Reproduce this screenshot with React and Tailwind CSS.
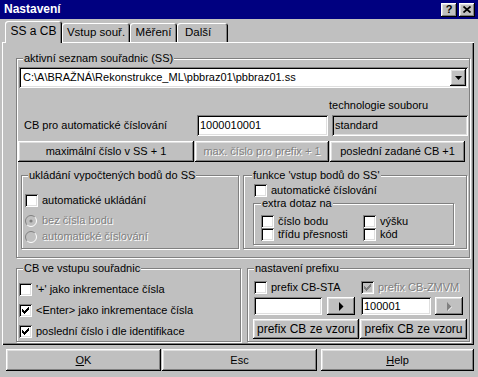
const raised = "bg-[#c0c0c0] shadow-[inset_-1px_-1px_#000,inset_1px_1px_#fff,inset_-2px_-2px_#808080,inset_2px_2px_#dfdfdf]"
const sunken = "shadow-[inset_1px_1px_#808080,inset_-1px_-1px_#fff,inset_2px_2px_#000,inset_-2px_-2px_#dfdfdf]"
const dim = "text-[#808080] [text-shadow:1px_1px_0_#fff]"

function Group({ title, className, legend = "left-[6px]", children }) {
  return (
    <div className={`relative flex flex-col shrink-0 border border-[#808080] shadow-[inset_1px_1px_#fff,1px_1px_#fff] ${className}`}>
      <span className={`absolute -top-[7px] ${legend} bg-[#c0c0c0] px-[1px] leading-[13px] whitespace-nowrap`}>{title}</span>
      {children}
    </div>
  )
}

function Check({ checked, disabled }) {
  const c = disabled ? "#808080" : "#000"
  return (
    <span className={`w-[13px] h-[13px] shrink-0 flex items-center justify-center ${disabled ? "bg-[#c0c0c0]" : "bg-white"} ${sunken}`}>
      {checked && (
        <svg width="7" height="7" viewBox="0 0 7 7" shapeRendering="crispEdges">
          <g fill={c}>
            <rect x="6" y="0" width="1" height="1" />
            <rect x="5" y="1" width="2" height="1" />
            <rect x="0" y="2" width="1" height="1" />
            <rect x="4" y="2" width="3" height="1" />
            <rect x="0" y="3" width="2" height="1" />
            <rect x="3" y="3" width="3" height="1" />
            <rect x="0" y="4" width="5" height="1" />
            <rect x="1" y="5" width="3" height="1" />
            <rect x="2" y="6" width="1" height="1" />
          </g>
        </svg>
      )}
    </span>
  )
}

function CheckRow({ label, checked, disabled, className = "" }) {
  return (
    <div className={`flex items-center h-[13px] shrink-0 ${className}`}>
      <Check checked={checked} disabled={disabled} />
      <span className={`ml-[4px] whitespace-nowrap ${disabled ? dim : ""}`}>{label}</span>
    </div>
  )
}

function Radio({ label, dot, className = "" }) {
  return (
    <div className={`flex items-center h-[13px] shrink-0 ${className}`}>
      <svg width="12" height="12" viewBox="0 0 12 12" className="shrink-0">
        <circle cx="6" cy="6" r="5" fill="#c0c0c0" />
        <path d="M9.89 2.11A5.5 5.5 0 0 0 2.11 9.89" fill="none" stroke="#808080" />
        <path d="M2.11 9.89A5.5 5.5 0 0 0 9.89 2.11" fill="none" stroke="#fff" />
        {dot && <circle cx="6" cy="6" r="1.6" fill="#808080" />}
      </svg>
      <span className={`ml-[5px] whitespace-nowrap ${dim}`}>{label}</span>
    </div>
  )
}

function Btn({ children, className = "", disabled }) {
  return (
    <div className={`shrink-0 flex items-center justify-center whitespace-nowrap ${raised} ${disabled ? dim : ""} ${className}`}>
      {children}
    </div>
  )
}

function Arrow({ disabled }) {
  return (
    <svg width="5" height="9" viewBox="0 0 5 9">
      {disabled && <path d="M1 1l4 4-4 4z" fill="#fff" />}
      <path d="M0 0l4.5 4.5L0 9z" fill={disabled ? "#808080" : "#000"} />
    </svg>
  )
}

export default function App() {
  return (
    <div className="w-[478px] h-[377px] bg-[#c0c0c0] overflow-hidden flex flex-col font-['Liberation_Sans',Arial,sans-serif] text-[11px] leading-[13px] text-black">
      {/* title bar */}
      <div className="h-[19px] shrink-0 bg-[#000080] flex items-center pl-[4px] pr-[3px]">
        <span className="text-white font-bold text-[12px]">Nastavení</span>
        <div className="ml-auto flex gap-[2px]">
          <Btn className="w-[16px] h-[14px] font-bold text-[11px] pb-[1px]">?</Btn>
          <Btn className="w-[16px] h-[14px]">
            <svg width="8" height="7" viewBox="0 0 8 7">
              <path d="M0.5 0.5L7.5 6.5M7.5 0.5L0.5 6.5" stroke="#000" strokeWidth="1.7" />
            </svg>
          </Btn>
        </div>
      </div>

      {/* tabs */}
      <div className="mt-[2px] h-[21px] shrink-0 flex items-end pl-[5px]">
        <div className="relative z-10 h-[22px] w-[57px] -mb-[1px] bg-[#c0c0c0] rounded-t-[3px] shadow-[inset_1px_1px_#fff,inset_-1px_0_#000,inset_-2px_0_#808080] flex justify-center pt-[4px] text-[12px]">
          SS a CB
        </div>
        <div className="h-[19px] w-[68px] rounded-t-[3px] shadow-[inset_1px_1px_#fff,inset_-1px_0_#000,inset_-2px_0_#808080] flex justify-center pt-[3px] text-[11.5px]">
          Vstup souř.
        </div>
        <div className="h-[19px] w-[47px] rounded-t-[3px] shadow-[inset_1px_1px_#fff,inset_-1px_0_#000,inset_-2px_0_#808080] flex justify-center pt-[3px] text-[11.5px]">
          Měření
        </div>
        <div className="h-[19px] w-[51px] rounded-t-[3px] shadow-[inset_1px_1px_#fff,inset_-1px_0_#000,inset_-2px_0_#808080] flex pl-[8px] pt-[3px] text-[11.5px]">
          Další
        </div>
      </div>

      {/* tab panel */}
      <div className="ml-[2px] w-[472px] h-[303px] shrink-0 flex flex-col shadow-[inset_1px_1px_#fff,inset_-1px_-1px_#000,inset_-2px_-2px_#808080]">
        <Group title="aktivní seznam souřadnic (SS)" className="ml-[14px] mt-[16px] w-[454px] h-[200px]">
          <div className={`ml-[2px] mt-[8px] w-[449px] h-[21px] shrink-0 bg-white flex items-center pl-[4px] pr-[2px] ${sunken}`}>
            <span className="whitespace-nowrap">{"C:\\A\\BRAŽNÁ\\Rekonstrukce_ML\\pbbraz01\\pbbraz01.ss"}</span>
            <Btn className="ml-auto w-[16px] h-[17px]">
              <svg width="7" height="4" viewBox="0 0 7 4">
                <path d="M0 0h7L3.5 4z" fill="#000" />
              </svg>
            </Btn>
          </div>

          <div className="mt-[11px] ml-[312px] h-[13px] shrink-0 whitespace-nowrap">technologie souboru</div>

          <div className="mt-[3px] h-[21px] shrink-0 flex items-center">
            <span className="ml-[7px] w-[173px] whitespace-nowrap">CB pro automatické číslování</span>
            <div className={`w-[131px] h-[21px] bg-white flex items-center pl-[3px] ${sunken}`}>1000010001</div>
            <div className={`ml-[4px] w-[136px] h-[21px] bg-[#c0c0c0] flex items-center pl-[3px] ${sunken}`}>standard</div>
          </div>

          <div className="mt-[5px] h-[21px] shrink-0 flex">
            <Btn className="ml-[1px] w-[176px] h-[21px]">maximální číslo v SS + 1</Btn>
            <Btn className="ml-[1px] w-[134px] h-[21px]" disabled>max. číslo pro prefix + 1</Btn>
            <Btn className="ml-[1px] w-[135px] h-[21px]">poslední zadané CB +1</Btn>
          </div>

          <div className="mt-[13px] flex items-start shrink-0">
            <Group title="ukládání vypočtených bodů do SS" className="ml-[4px] w-[218px] h-[74px]" legend="left-[6px]">
              <CheckRow label="automatické ukládání" className="ml-[3px] mt-[18px]" />
              <Radio label="bez čísla bodu" dot className="ml-[3px] mt-[7px]" />
              <Radio label="automatické číslování" className="ml-[3px] mt-[3px]" />
            </Group>
            <Group title="funkce 'vstup bodů do SS'" className="ml-[4px] w-[224px] h-[74px]" legend="left-[8px]">
              <CheckRow label="automatické číslování" className="ml-[10px] mt-[8px]" />
              <Group title="extra dotaz na" className="ml-[9px] mt-[6px] w-[201px] h-[42px]" legend="left-[7px]">
                <div className="mt-[11px] ml-[7px] flex">
                  <CheckRow label="číslo bodu" className="w-[102px]" />
                  <CheckRow label="výšku" />
                </div>
                <div className="ml-[7px] flex">
                  <CheckRow label="třídu přesnosti" className="w-[102px]" />
                  <CheckRow label="kód" />
                </div>
              </Group>
            </Group>
          </div>
        </Group>

        <div className="mt-[10px] flex items-start shrink-0">
          <Group title="CB ve vstupu souřadnic" className="ml-[14px] w-[225px] h-[74px]" legend="left-[6px]">
            <CheckRow label="'+' jako inkrementace čísla" className="ml-[2px] mt-[14px]" />
            <CheckRow label={"<Enter> jako inkrementace čísla"} checked className="ml-[2px] mt-[8px]" />
            <CheckRow label="poslední číslo i dle identifikace" checked className="ml-[2px] mt-[8px]" />
          </Group>
          <Group title="nastavení prefixu" className="ml-[6px] w-[223px] h-[74px]" legend="left-[6px]">
            <div className="mt-[12px] ml-[6px] flex">
              <CheckRow label="prefix CB-STA" className="w-[107px]" />
              <CheckRow label="prefix CB-ZMVM" checked disabled />
            </div>
            <div className="mt-[3px] h-[18px] flex shrink-0">
              <div className={`ml-[6px] w-[68px] h-[18px] bg-white ${sunken}`} />
              <Btn className="ml-[5px] w-[28px] h-[18px]"><Arrow /></Btn>
              <div className={`ml-[6px] w-[70px] h-[18px] bg-white flex items-center pl-[3px] ${sunken}`}>100001</div>
              <Btn className="ml-[4px] w-[28px] h-[18px]"><Arrow disabled /></Btn>
            </div>
            <div className="mt-[4px] h-[20px] flex shrink-0">
              <Btn className="ml-[5px] w-[106px] h-[20px] text-[12px]">prefix CB ze vzoru</Btn>
              <Btn className="ml-[1px] w-[107px] h-[20px] text-[12px]">prefix CB ze vzoru</Btn>
            </div>
          </Group>
        </div>
      </div>

      {/* dialog buttons */}
      <div className="mt-[4px] h-[22px] shrink-0 flex">
        <Btn className="ml-[6px] w-[155px] h-[22px]"><span><span className="underline">O</span>K</span></Btn>
        <Btn className="ml-[1px] w-[155px] h-[22px]">Esc</Btn>
        <Btn className="ml-[4px] w-[153px] h-[22px]"><span><span className="underline">H</span>elp</span></Btn>
      </div>
    </div>
  )
}
